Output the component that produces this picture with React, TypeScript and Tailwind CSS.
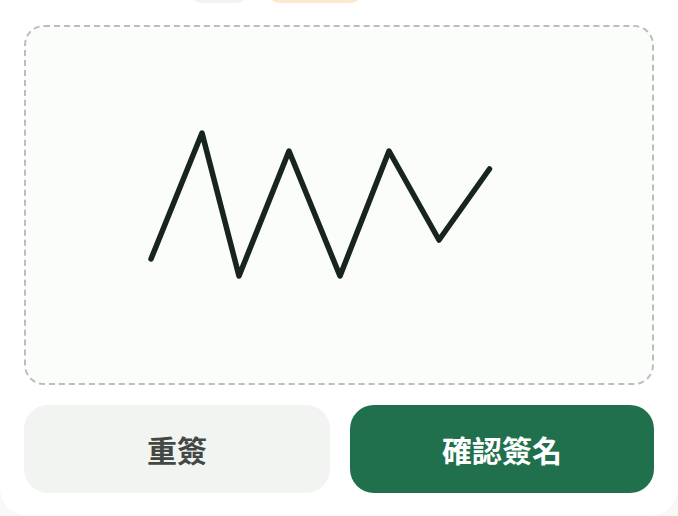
const points = "151,259 202,133 239,276 289,151 340,276 389,151 439,240 489.5,169";

export default function App() {
  return (
    <div className="h-[516px] w-[678px] overflow-hidden bg-[#f7f8f7] font-['Noto_Sans_CJK_TC','Noto_Sans_CJK_SC',sans-serif]">
      <div className="flex h-full flex-col rounded-b-[28px] bg-white px-6">
        <div className="-mt-5 ml-[166px] flex h-[23px] gap-5">
          <div className="h-full w-[58px] rounded-full bg-[#f2f4f2]" />
          <div className="h-full w-[94px] rounded-full bg-[#fde8cf]" />
        </div>
        <div className="relative mt-[22px] h-[360px] rounded-[20px] border-2 border-dashed border-[#bdbdbd] bg-[#fbfdfa]">
          <svg className="absolute -left-[26px] -top-[27px] h-[516px] w-[678px]" viewBox="0 0 678 516" fill="none">
            <polyline points={points} stroke="#17251d" strokeWidth="5.5" strokeLinecap="round" strokeLinejoin="round" />
          </svg>
        </div>
        <div className="mt-5 flex gap-5">
          <button className="h-[88px] w-[306px] rounded-3xl bg-[#f2f4f2] text-[30px] font-bold text-[#444844]">重簽</button>
          <button className="h-[88px] w-[304px] rounded-3xl bg-[#20704d] text-[30px] font-bold text-white">確認簽名</button>
        </div>
      </div>
    </div>
  );
}
